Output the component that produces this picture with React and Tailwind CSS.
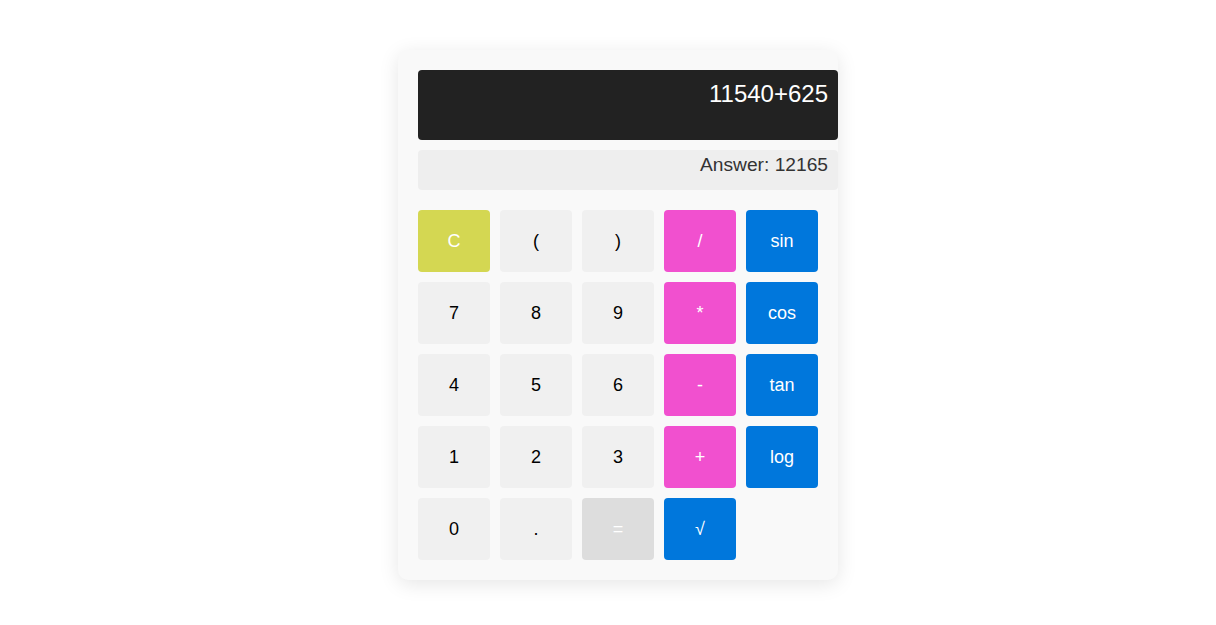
const rows = [
  ['C', '(', ')', '/', 'sin'],
  ['7', '8', '9', '*', 'cos'],
  ['4', '5', '6', '-', 'tan'],
  ['1', '2', '3', '+', 'log'],
  ['0', '.', '=', '√'],
]

function btnClass(label) {
  if (label === 'C') return 'bg-[#d4d752] text-white'
  if (['/', '*', '-', '+'].includes(label)) return 'bg-[#f150cf] text-white'
  if (['sin', 'cos', 'tan', 'log', '√'].includes(label)) return 'bg-[#0077dc] text-white'
  if (label === '=') return 'bg-[#dddddd] text-white'
  return 'bg-[#f0f0f0] text-black'
}

export default function App() {
  return (
    <div className="min-h-screen bg-white flex justify-center pt-[50px] font-['Liberation_Sans',Arial,sans-serif]">
      <div className="pl-5">
        <div className="w-[440px] h-[530px] rounded-[10px] bg-[#f9f9f9] p-5 shadow-[0_4px_20px_rgba(0,0,0,0.1)]">
          {/* display */}
          <div className="w-[420px] h-[70px] rounded bg-[#222222] px-[10px] pt-[10px] text-right text-[24px] leading-[28px] text-white">
            11540+625
          </div>
          <div className="mt-[10px] w-[420px] h-10 rounded bg-[#eeeeee] px-[10px] pt-[1px] text-right text-[19.2px] leading-normal text-[#333333]">
            Answer: 12165
          </div>

          {/* keys */}
          <div className="mt-5 grid grid-cols-[repeat(5,72px)] auto-rows-[62px] gap-[10px]">
            {rows.flat().map((label, i) => (
              <button
                key={i}
                className={`rounded flex items-center justify-center text-[18px] ${btnClass(label)}`}
              >
                {label}
              </button>
            ))}
          </div>
        </div>
      </div>
    </div>
  )
}
